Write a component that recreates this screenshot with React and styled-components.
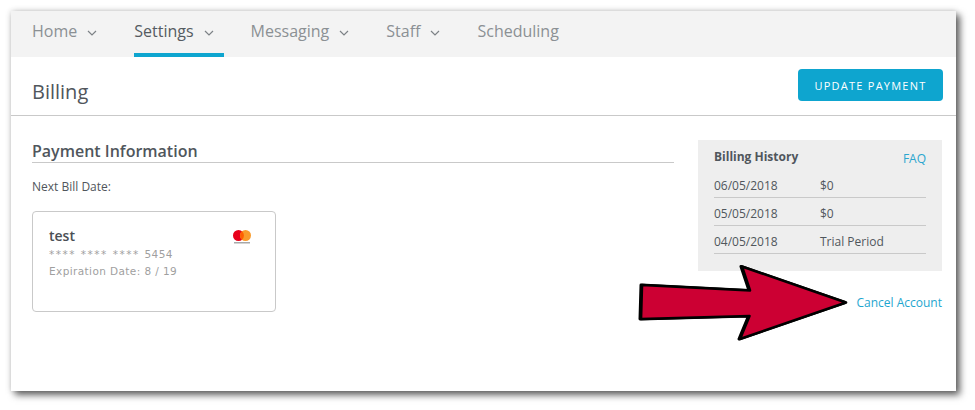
import styled, { createGlobalStyle } from 'styled-components'

const GlobalStyle = createGlobalStyle`
    html, body {
        margin: 0;
        padding: 0;
        background: #ffffff;
        font-family: "Open Sans", "Liberation Sans", sans-serif;
    }
    * {
        box-sizing: border-box;
    }
`
const Page = styled.div`
    width: 975px;
    height: 410px;
    padding: 11px 19px 19px 11px;
    overflow: hidden;
`
const Frame = styled.div`
    position: relative;
    width: 945px;
    height: 380px;
    background: #ffffff;
    box-shadow: 4px 4px 7px rgba(0, 0, 0, 0.6), 0 0 6px rgba(0, 0, 0, 0.18);
`
const Nav = styled.nav`
    display: flex;
    height: 46px;
    padding-left: 21px;
    gap: 27px;
    background: #f3f3f3;
`
const NavItem = styled.a`
    display: flex;
    align-items: center;
    gap: 10px;
    height: 46px;
    padding: 0 10px 2px 0;
    font-size: 16px;
    color: ${props => props.$active ? '#555b61' : '#8b9094'};
    border-bottom: 4px solid ${props => props.$active ? '#0ea5cf' : 'transparent'};
`
const Chevron = styled.svg`
    width: 10px;
    height: 6px;
    margin-top: 4px;
    fill: none;
    stroke: #7d8286;
    stroke-width: 1.2;
`
const TitleRow = styled.header`
    display: flex;
    align-items: flex-start;
    justify-content: space-between;
    height: 59px;
    padding: 12px 13px 0 21px;
    border-bottom: 1px solid #c9c9c9;
`
const Title = styled.h1`
    margin: 8px 0 0;
    font-size: 20px;
    line-height: 30px;
    font-weight: 400;
    color: #50565c;
`
const UpdateButton = styled.button`
    width: 145px;
    height: 32px;
    border: 0;
    border-radius: 4px;
    background: #0ea5cf;
    color: #ffffff;
    font-family: "Open Sans", sans-serif;
    font-size: 11px;
    font-weight: 500;
    letter-spacing: 1.25px;
`
const Content = styled.div`
    display: flex;
    align-items: flex-start;
    justify-content: space-between;
    padding: 24px 14px 0 21px;
`
const LeftColumn = styled.section`
    width: 642px;
`
const SectionTitle = styled.h2`
    margin: 0;
    height: 23px;
    font-size: 16px;
    line-height: 22px;
    font-weight: 600;
    color: #50565c;
    border-bottom: 1px solid #c9c9c9;
`
const NextBill = styled.p`
    margin: 16px 0 16px;
    font-size: 12px;
    line-height: 16px;
    color: #50565c;
`
const Card = styled.div`
    position: relative;
    width: 244px;
    height: 101px;
    padding: 15px 16px;
    border: 1px solid #c9c9c9;
    border-radius: 4px;
`
const CardName = styled.div`
    margin-bottom: 1px;
    font-size: 14px;
    line-height: 18px;
    font-weight: 600;
    color: #4a4f55;
`
const CardLine = styled.div`
    font-family: "DejaVu Sans", sans-serif;
    font-size: 10.5px;
    line-height: 17px;
    letter-spacing: 0.4px;
    color: #9f9f9f;
`
const CardStars = styled.span`
    letter-spacing: 1.5px;
`
const CardLogo = styled.svg`
    position: absolute;
    top: 18px;
    right: 23px;
    width: 20px;
    height: 16px;
`
const RightColumn = styled.aside`
    display: flex;
    flex-direction: column;
    align-items: flex-end;
    width: 244px;
`
const HistoryPanel = styled.div`
    width: 244px;
    height: 131px;
    padding: 8px 16px 0;
    background: #eeeeee;
`
const HistoryHeader = styled.div`
    display: flex;
    justify-content: space-between;
    height: 22px;
`
const HistoryTitle = styled.div`
    font-size: 12px;
    line-height: 17px;
    font-weight: 700;
    color: #50565c;
`
const Faq = styled.a`
    margin-top: 2px;
    font-size: 12px;
    line-height: 17px;
    color: #2ba6cf;
`
const HistoryRow = styled.div`
    display: flex;
    align-items: center;
    height: 28px;
    padding-top: 3px;
    border-bottom: 1px solid #c9c9c9;
    font-size: 12px;
    color: #50565c;
`
const HistoryDate = styled.span`
    width: 106px;
`
const CancelLink = styled.a`
    margin-top: 24px;
    font-size: 12px;
    line-height: 16px;
    color: #1ea6cf;
`
const Arrow = styled.svg`
    position: absolute;
    left: 620px;
    top: 248px;
    width: 225px;
    height: 90px;
    filter: blur(0.6px);
`

const navItems = [
    { label: 'Home', menu: true },
    { label: 'Settings', menu: true, active: true },
    { label: 'Messaging', menu: true },
    { label: 'Staff', menu: true },
    { label: 'Scheduling' },
]

const history = [
    { date: '06/05/2018', amount: '$0' },
    { date: '05/05/2018', amount: '$0' },
    { date: '04/05/2018', amount: 'Trial Period' },
]

const arrowPoints = '631,274 739,279.5 731,255.5 835,291.5 729,328 738.5,305 630,308'

const App = () => {
    return (
        <Page>
            <GlobalStyle />
            <Frame>
                <Nav>
                    {navItems.map(item => (
                        <NavItem key={item.label} $active={item.active}>
                            {item.label}
                            {item.menu && (
                                <Chevron viewBox="0 0 10 6">
                                    <path d="M1 1l4 4 4-4" />
                                </Chevron>
                            )}
                        </NavItem>
                    ))}
                </Nav>
                <TitleRow>
                    <Title>Billing</Title>
                    <UpdateButton>UPDATE PAYMENT</UpdateButton>
                </TitleRow>
                <Content>
                    <LeftColumn>
                        <SectionTitle>Payment Information</SectionTitle>
                        <NextBill>Next Bill Date:</NextBill>
                        <Card>
                            <CardName>test</CardName>
                            <CardLine><CardStars>**** **** **** </CardStars>5454</CardLine>
                            <CardLine>Expiration Date: 8 / 19</CardLine>
                            <CardLogo viewBox="0 0 20 16">
                                <circle cx="6.5" cy="5.5" r="5.5" fill="#e8001b" />
                                <circle cx="13.5" cy="5.5" r="5.5" fill="#f99b2a" />
                                <path d="M10 1.3a5.5 5.5 0 0 1 0 8.4a5.5 5.5 0 0 1 0-8.4z" fill="#ff5f00" />
                                <rect x="2" y="12" width="16" height="1.5" fill="#a8a8a8" />
                            </CardLogo>
                        </Card>
                    </LeftColumn>
                    <RightColumn>
                        <HistoryPanel>
                            <HistoryHeader>
                                <HistoryTitle>Billing History</HistoryTitle>
                                <Faq>FAQ</Faq>
                            </HistoryHeader>
                            {history.map(row => (
                                <HistoryRow key={row.date}>
                                    <HistoryDate>{row.date}</HistoryDate>
                                    {row.amount}
                                </HistoryRow>
                            ))}
                        </HistoryPanel>
                        <CancelLink>Cancel Account</CancelLink>
                    </RightColumn>
                </Content>
                <Arrow viewBox="620 248 225 90">
                    <polygon
                        points={arrowPoints}
                        transform="translate(-1 0)"
                        fill="#000000"
                        stroke="#000000"
                        strokeWidth="3"
                        strokeLinejoin="round"
                    />
                    <polygon
                        points={arrowPoints}
                        fill="#cc0033"
                        stroke="#000000"
                        strokeWidth="2.6"
                        strokeLinejoin="round"
                    />
                </Arrow>
            </Frame>
        </Page>
    )
}

export default App
